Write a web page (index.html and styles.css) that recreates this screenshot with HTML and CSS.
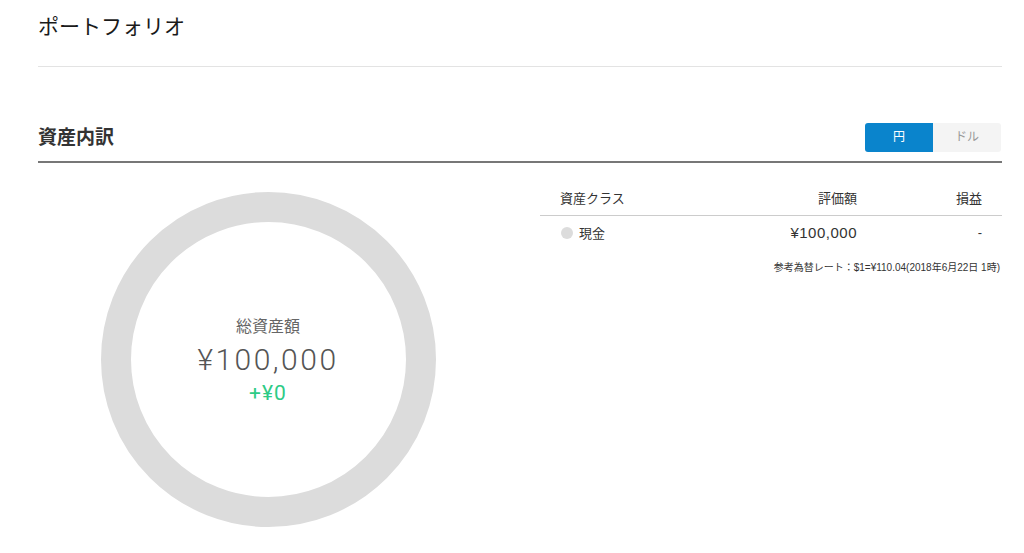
FILE: index.html
```html
<!DOCTYPE html>
<html lang="ja">
<head>
  <meta charset="utf-8">
  <title>ポートフォリオ</title>
  <link rel="stylesheet" href="styles.css">
</head>
<body>
  <div class="page">
    <h1 class="page-title">ポートフォリオ</h1>

    <div class="section-head">
      <h2>資産内訳</h2>
      <div class="toggle">
        <span class="toggle-item active">円</span>
        <span class="toggle-item">ドル</span>
      </div>
    </div>

    <div class="breakdown">
      <div class="chart-col">
        <div class="donut">
          <div class="donut-label">総資産額</div>
          <div class="donut-amount">¥100,000</div>
          <div class="donut-change">+¥0</div>
        </div>
      </div>

      <div class="table-col">
        <div class="asset-row head">
          <span class="cell name">資産クラス</span>
          <span class="cell value">評価額</span>
          <span class="cell pl">損益</span>
        </div>
        <div class="asset-row">
          <span class="cell name"><i class="dot"></i>現金</span>
          <span class="cell value num">¥100,000</span>
          <span class="cell pl">-</span>
        </div>
        <p class="note">参考為替レート：$1=¥110.04(2018年6月22日 1時)</p>
      </div>
    </div>
  </div>
</body>
</html>
```

FILE: styles.css
```css
body {
  margin: 0;
  background: #fff;
  color: #222;
  font-family: "Liberation Sans", "Noto Sans CJK JP", sans-serif;
}
.page {
  padding: 0 22px 0 38px;
}
.page-title {
  margin: 0;
  padding-top: 14px;
  height: 52px;
  line-height: 26px;
  font-size: 21px;
  font-weight: normal;
  color: #1a1a1a;
  border-bottom: 1px solid #e3e3e3;
}
.section-head {
  display: flex;
  justify-content: space-between;
  align-items: center;
  padding: 56px 0 9px;
  border-bottom: 2px solid #777;
}
.section-head h2 {
  margin: 0;
  font-size: 19px;
  line-height: 26px;
  color: #333;
}
.toggle {
  display: flex;
  height: 29px;
  margin-right: 1px;
  border-radius: 3px;
  overflow: hidden;
}
.toggle-item {
  width: 68px;
  line-height: 29px;
  text-align: center;
  font-size: 12px;
  background: #f4f4f4;
  color: #999;
}
.toggle-item.active {
  background: #0a84cc;
  color: #fff;
}
.breakdown {
  display: flex;
  gap: 42px;
}
.chart-col {
  width: 460px;
  display: flex;
  justify-content: center;
  padding-top: 29px;
}
.donut {
  width: 275px;
  height: 275px;
  border: 30px solid #dcdcdc;
  border-radius: 50%;
  display: flex;
  flex-direction: column;
  justify-content: center;
  align-items: center;
}
.donut-label {
  font-size: 16px;
  line-height: 22px;
  color: #666;
}
.donut-amount {
  font-size: 30px;
  line-height: 44px;
  letter-spacing: 2.5px;
  color: #555;
  font-family: "Roboto", "Noto Sans CJK JP", sans-serif;
  font-weight: 300;
}
.donut-change {
  font-size: 21px;
  line-height: 22px;
  letter-spacing: 1px;
  color: #2ecb86;
  font-family: "Roboto", "Noto Sans CJK JP", sans-serif;
}
.table-col {
  flex: 1;
  padding-top: 16px;
}
.asset-row {
  display: grid;
  grid-template-columns: 1fr 150px 145px;
  align-items: center;
  height: 33px;
  font-size: 13px;
  color: #333;
}
.asset-row.head {
  height: 36px;
  border-bottom: 1px solid #ccc;
}
.cell.name {
  padding-left: 20px;
  display: flex;
  align-items: center;
}
.cell.value {
  text-align: right;
}
.cell.num {
  font-size: 15px;
  letter-spacing: 0.5px;
}
.cell.pl {
  text-align: right;
  padding-right: 20px;
}
.dot {
  width: 12px;
  height: 12px;
  border-radius: 50%;
  background: #dcdcdc;
  margin: 0 6px 0 1px;
}
.note {
  margin: 10px 2px 0 0;
  text-align: right;
  font-size: 10px;
  color: #333;
}
```
